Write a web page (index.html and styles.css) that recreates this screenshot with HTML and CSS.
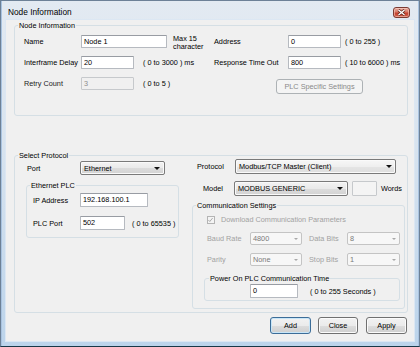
FILE: index.html
```html
<!DOCTYPE html>
<html lang="en">
<head>
    <meta charset="UTF-8">
    <meta name="viewport" content="width=device-width, initial-scale=1.0">
    <title>Node Information</title>
    <link rel="stylesheet" href="styles.css">
</head>
<body>

<div class="window">
    <div class="titlebar">
        <span class="caption">Node Information</span>
        <span class="close-btn">
            <svg width="9" height="7" viewBox="0 0 9 7">
                <path d="M1.5 1 L7.5 6 M7.5 1 L1.5 6" stroke="#5b2219" stroke-width="2.8"/>
                <path d="M1.5 1 L7.5 6 M7.5 1 L1.5 6" stroke="#fff" stroke-width="1.4"/>
            </svg>
        </span>
    </div>

    <div class="client">

        <!-- node information -->
        <div class="group node-group">
            <div class="group-title">Node Information</div>

            <div class="row mt5 pl9">
                <div class="half w190">
                    <span class="w57">Name</span>
                    <div class="input w86">Node 1</div>
                    <span class="note ml6">Max 15<br>character</span>
                </div>
                <div class="half">
                    <span class="w74">Address</span>
                    <div class="input w53">0</div>
                    <span class="ml4">( 0 to 255 )</span>
                </div>
            </div>

            <div class="row mt8 pl9">
                <div class="half w190">
                    <span class="w57">Interframe Delay</span>
                    <div class="input w53">20</div>
                    <span class="ml9">( 0 to 3000 ) ms</span>
                </div>
                <div class="half">
                    <span class="w74">Response Time Out</span>
                    <div class="input w53">800</div>
                    <span class="ml4">( 10 to 6000 ) ms</span>
                </div>
            </div>

            <div class="row mt8 pl9">
                <div class="half w190">
                    <span class="w57 dim">Retry Count</span>
                    <div class="input w53 disabled">3</div>
                    <span class="ml9">( 0 to 5 )</span>
                </div>
                <div class="half">
                    <div class="btn disabled plc-btn">PLC Specific Settings</div>
                </div>
            </div>
        </div>

        <!-- protocol -->
        <div class="group proto-group">
            <div class="group-title">Select Protocol</div>

            <div class="flex">
                <div class="left-col">
                    <div class="field h14 mt1 pl12">
                        <span class="w53">Port</span>
                        <div class="combo w85"><span>Ethernet</span><i class="arrow"></i></div>
                    </div>

                    <div class="group eth-group">
                        <div class="group-title">Ethernet PLC</div>
                        <div class="field h14 mt3 pl6">
                            <span class="w47">IP Address</span>
                            <div class="input h14 w68">192.168.100.1</div>
                        </div>
                        <div class="field h14 mt9 pl6">
                            <span class="w47">PLC Port</span>
                            <div class="input h14 w45">502</div>
                            <span class="ml7">( 0 to 65535 )</span>
                        </div>
                    </div>
                </div>

                <div class="right-col">
                    <div class="field h15 mt-1 pl5">
                        <span class="w38">Protocol</span>
                        <div class="combo light w161"><span>Modbus/TCP Master (Client)</span><i class="arrow"></i></div>
                    </div>
                    <div class="field h15 mt7 pl11">
                        <span class="w31">Model</span>
                        <div class="combo w114"><span>MODBUS GENERIC</span><i class="arrow"></i></div>
                        <div class="input disabled words ml4 w25"></div>
                        <span class="ml4">Words</span>
                    </div>

                    <div class="group comm-group">
                        <div class="group-title">Communication Settings</div>

                        <div class="field h9 mt5 pl14 off-text">
                            <span class="check">
                                <svg width="8" height="8" viewBox="0 0 8 8">
                                    <path d="M1.6 4 L3.2 5.7 L6.4 1.8" fill="none" stroke="#a6a6a6" stroke-width="1.1"/>
                                </svg>
                            </span>
                            <span class="ml6">Download Communication Parameters</span>
                        </div>

                        <div class="field h13 mt8 pl14">
                            <span class="w43 off-text">Baud Rate</span>
                            <div class="combo off w52"><span>4800</span><i class="arrow"></i></div>
                            <span class="w38 ml7 off-text">Data Bits</span>
                            <div class="combo off w53"><span>8</span><i class="arrow"></i></div>
                        </div>

                        <div class="field h13 mt8 pl14">
                            <span class="w43 off-text">Parity</span>
                            <div class="combo off w52"><span>None</span><i class="arrow"></i></div>
                            <span class="w38 ml7 off-text">Stop Bits</span>
                            <div class="combo off w53"><span>1</span><i class="arrow"></i></div>
                        </div>

                        <div class="group power-group">
                            <div class="group-title">Power On PLC Communication Time</div>
                            <div class="field h14 mt1 pl45">
                                <div class="input h14 w48">0</div>
                                <span class="ml12">( 0 to 255 Seconds )</span>
                            </div>
                        </div>
                    </div>
                </div>
            </div>
        </div>

        <div class="actions">
            <div class="btn default w41">Add</div>
            <div class="btn w40">Close</div>
            <div class="btn w41">Apply</div>
        </div>
    </div>
</div>

</body>
</html>
```

FILE: styles.css
```css
* {
    margin: 0;
    padding: 0;
    box-sizing: border-box;
}

body {
    width: 420px;
    height: 347px;
    overflow: hidden;
    background: #183848;
    font-family: "Liberation Sans", Arial, sans-serif;
    font-size: 7.3px;
    color: #000;
}

.window {
    width: 420px;
    height: 347px;
    display: flex;
    flex-direction: column;
    padding: 0 4px 4px 4px;
    border: 1px solid #6d8197;
    border-bottom-color: #183848;
    background: linear-gradient(#e3eaf2 0%, #d9e4ef 40%, #bcd4eb 100%);
    box-shadow: inset 1px 0 0 #a9c3e0, inset -1px 0 0 #a9c3e0;
}

.titlebar {
    height: 18px;
    display: flex;
    align-items: flex-start;
    justify-content: space-between;
    padding: 6px 5px 0 3px;
}

.caption {
    font-size: 8.3px;
    line-height: 11px;
    color: #000;
}

.close-btn {
    width: 17px;
    height: 11px;
    display: flex;
    align-items: center;
    justify-content: center;
    border: 1px solid #7a3a32;
    border-radius: 3px;
    background: linear-gradient(#e9aa9d 0%, #d67a68 45%, #c4412f 55%, #cf5f4a 100%);
    box-shadow: inset 0 0 0 1px rgba(255, 220, 210, 0.5);
}

.client {
    flex: 1;
    display: flex;
    flex-direction: column;
    background: #f0f0f0;
    border: 1px solid #dce7f3;
}

.flex {
    display: flex;
}

/* group boxes */
.group {
    border: 1px solid #d5dfe5;
    border-radius: 3px;
}

.group-title {
    width: max-content;
    height: 9px;
    line-height: 9px;
    margin: -5px 0 0 3px;
    padding: 0 1px;
    background: #f0f0f0;
    color: #000;
}

.node-group {
    height: 91px;
    margin: 5px 6px 0 8px;
}

.proto-group {
    height: 158px;
    margin: 39px 6px 0 8px;
}

.eth-group {
    width: 153px;
    height: 53px;
    margin: 10px 0 0 11px;
}

.comm-group {
    width: 213px;
    height: 104px;
    margin-top: 9px;
}

.power-group {
    width: 196px;
    height: 23px;
    margin: 12px 0 0 11px;
}

.power-group .group-title {
    margin-left: 4px;
}

.left-col {
    width: 177px;
}

.right-col {
    flex: 1;
}

/* rows */
.row {
    display: flex;
    height: 13px;
}

.half {
    display: flex;
    align-items: center;
}

.field {
    display: flex;
    align-items: center;
}

.note {
    align-self: flex-start;
    line-height: 8px;
}

.dim {
    color: #222;
}

.off-text {
    color: #a2a2a2;
}

/* controls */
.input {
    height: 13px;
    line-height: 11px;
    padding: 0 2px;
    background: #fff;
    border: 1px solid #b6bac0;
    border-top-color: #989ca3;
    border-radius: 1px;
    white-space: nowrap;
    overflow: hidden;
    color: #000;
}

.input.h14 {
    height: 14px;
    line-height: 12px;
}

.input.disabled {
    background: #f0f0f0;
    border-color: #c6c9cc;
    color: #8c8c8c;
}

.input.words {
    height: 15px;
    background: #f4f4f4;
}

.combo {
    height: 100%;
    display: flex;
    align-items: center;
    justify-content: space-between;
    padding: 0 4px 0 3px;
    border: 1px solid #7a7a7a;
    border-radius: 2px;
    background: linear-gradient(#f3f3f3 0%, #eaeaea 50%, #dcdcdc 51%, #d3d3d3 100%);
    box-shadow: inset 0 0 0 1px #fafafa;
    white-space: nowrap;
    color: #000;
}

.combo.light {
    background: linear-gradient(#f7f7f7 0%, #efefef 50%, #e5e5e5 51%, #dedede 100%);
    padding-right: 3px;
}

.combo.off {
    padding: 0 3px 0 2px;
    background: #f7f7f7;
    border-color: #c4c4c4;
    box-shadow: none;
    color: #7a7a7a;
}

.arrow {
    width: 0;
    height: 0;
    border-left: 3px solid transparent;
    border-right: 3px solid transparent;
    border-top: 3px solid #111;
}

.combo.off .arrow {
    border-left-width: 2.5px;
    border-right-width: 2.5px;
    border-top: 2.5px solid #a8a8a8;
}

.check {
    width: 8px;
    height: 8px;
    display: flex;
    border: 1px solid #b4b4b4;
    background: #f4f4f4;
}

.check svg {
    margin: -1px 0 0 -1px;
}

.btn {
    height: 17px;
    display: flex;
    align-items: center;
    justify-content: center;
    border: 1px solid #707070;
    border-radius: 3px;
    background: linear-gradient(#f2f2f2 0%, #ebebeb 50%, #dddddd 51%, #cfcfcf 100%);
    box-shadow: inset 0 0 0 1px #fbfbfb;
    color: #000;
}

.btn.default {
    border-color: #3c6d98;
    box-shadow: inset 0 0 0 1px #c8e6f8;
}

.btn.disabled {
    background: #f4f4f4;
    border-color: #adb2b5;
    box-shadow: none;
    color: #8a8a8a;
}

.plc-btn {
    width: 87px;
    height: 15px;
    align-self: flex-start;
    margin: 2px 0 0 62px;
}

.actions {
    display: flex;
    justify-content: flex-end;
    gap: 7px;
    margin: 4px 7px 0 0;
}

.actions .btn:last-child {
    margin-left: 1px;
}

/* sizes */
.h9 { height: 9px; }
.h13 { height: 13px; }
.h14 { height: 14px; }
.h15 { height: 15px; }

.w25 { width: 25px; flex: none; }
.w31 { width: 31px; flex: none; }
.w38 { width: 38px; flex: none; }
.w40 { width: 40px; flex: none; }
.w41 { width: 41px; flex: none; }
.w43 { width: 43px; flex: none; }
.w45 { width: 45px; flex: none; }
.w47 { width: 47px; flex: none; }
.w48 { width: 48px; flex: none; }
.w52 { width: 52px; flex: none; }
.w53 { width: 53px; flex: none; }
.w57 { width: 57px; flex: none; }
.w68 { width: 68px; flex: none; }
.w74 { width: 74px; flex: none; }
.w85 { width: 85px; flex: none; }
.w86 { width: 86px; flex: none; }
.w114 { width: 114px; flex: none; }
.w161 { width: 161px; flex: none; }
.w190 { width: 190px; flex: none; }

.mt-1 { margin-top: -1px; }
.mt1 { margin-top: 1px; }
.mt3 { margin-top: 3px; }
.mt5 { margin-top: 5px; }
.mt7 { margin-top: 7px; }
.mt8 { margin-top: 8px; }
.mt9 { margin-top: 9px; }

.ml4 { margin-left: 4px; }
.ml6 { margin-left: 6px; }
.ml7 { margin-left: 7px; }
.ml9 { margin-left: 9px; }
.ml12 { margin-left: 12px; }

.pl5 { padding-left: 5px; }
.pl6 { padding-left: 6px; }
.pl9 { padding-left: 9px; }
.pl11 { padding-left: 11px; }
.pl12 { padding-left: 12px; }
.pl14 { padding-left: 14px; }
.pl45 { padding-left: 45px; }
```
